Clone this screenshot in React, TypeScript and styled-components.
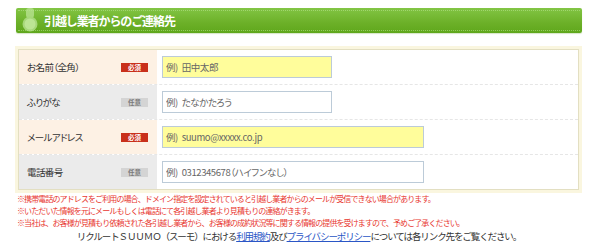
import React from "react";
import styled, { createGlobalStyle } from "styled-components";

const Global = createGlobalStyle`
  html, body { margin: 0; padding: 0; background: #fff; }
  body { font-family: "Noto Sans CJK JP", "Noto Sans", sans-serif; color: #333; }
  * { box-sizing: border-box; }
`;

const Page = styled.div`
  width: 600px;
  height: 244px;
  padding: 8px 0 0 16px;
  overflow: hidden;
`;

const Header = styled.div`
  width: 566px;
  height: 25px;
  border-radius: 2px;
  background: linear-gradient(#82c544, #6cb028 60%, #5fa71c);
  box-shadow: 0 1px 1px rgba(90, 150, 30, 0.25);
  display: flex;
  align-items: center;
  gap: 6px;
  padding-left: 6px;
  position: relative;
  &::before, &::after {
    content: "";
    position: absolute;
    left: 2px;
    right: 2px;
    border-top: 1px dotted rgba(190, 230, 150, 0.55);
  }
  &::before { top: 2px; }
  &::after { bottom: 2px; }
`;

const HeaderTitle = styled.h2`
  margin: 0;
  font-size: 12px;
  font-weight: 700;
  letter-spacing: -1.1px;
  color: #fff;
  line-height: 1;
`;

const Frame = styled.div`
  margin: 13px 0 0 -1px;
  width: 567px;
  padding: 3px;
  background: #faf6df;
`;

const Table = styled.div`
  border: 1px solid #e3dfc2;
  background: #fff;
  display: flex;
  flex-direction: column;
`;

const Row = styled.div<{ $last?: boolean }>`
  display: flex;
  height: ${(p) => (p.$last ? 34 : 35)}px;
  border-bottom: ${(p) => (p.$last ? "none" : "1px dashed #e6e6e6")};
`;

const Label = styled.div<{ $required?: boolean }>`
  width: 138px;
  flex: none;
  display: flex;
  align-items: center;
  justify-content: space-between;
  padding: 0 9px 0 8px;
  background: ${(p) => (p.$required ? "#fdf1e4" : "#ebebeb")};
  font-size: 9.5px;
  letter-spacing: -0.6px;
  font-feature-settings: "palt";
  color: #333;
`;

const Badge = styled.span<{ $required?: boolean }>`
  width: 27px;
  height: 9px;
  display: flex;
  align-items: center;
  justify-content: center;
  font-size: 6.5px;
  font-weight: 700;
  letter-spacing: 0;
  line-height: 1;
  background: ${(p) => (p.$required ? "#c9301b" : "#d4d4d4")};
  color: ${(p) => (p.$required ? "#fff" : "#7a7a7a")};
`;

const Field = styled.div`
  flex: 1;
  display: flex;
  align-items: center;
  padding-left: 5px;
`;

const Input = styled.input<{ $required?: boolean; $wide?: boolean }>`
  width: ${(p) => (p.$wide ? 262 : 170)}px;
  height: 22px;
  border: 1px solid #bccbd8;
  background: ${(p) => (p.$required ? "#fffd9b" : "#fff")};
  padding: 0 0 0 3px;
  font-family: "Noto Sans CJK JP", "Noto Sans", sans-serif;
  font-size: 9.5px;
  letter-spacing: -0.4px;
  font-feature-settings: "palt";
  word-spacing: 2px;
  color: #555;
  outline: none;
  &::placeholder { color: #666; opacity: 1; }
`;

const Notes = styled.div`
  margin-left: 1px;
  font-size: 8px;
  line-height: 12px;
  letter-spacing: -0.9px;
  color: #e8372f;
`;

const Note = styled.p`
  margin: 0;
  white-space: nowrap;
`;

const Footer = styled.p`
  margin: 0;
  width: 566px;
  text-align: center;
  font-size: 9.5px;
  line-height: 14px;
  letter-spacing: -1.1px;
  color: #333;
  white-space: nowrap;
`;

const Link = styled.a`
  color: #2a56c6;
  text-decoration: underline;
`;

const Icon = () => (
  <svg width="16" height="25" viewBox="0 0 16 25" style={{ flex: "none" }}>
    <rect x="4" y="0" width="8" height="10" rx="3" fill="#b3df8a" opacity="0.85" />
    <circle cx="8" cy="16" r="7.5" fill="#a6d779" />
    <circle cx="8" cy="16" r="5.5" fill="#bce594" />
  </svg>
);

const rows = [
  { label: "お名前（全角）", required: true, placeholder: "例) 田中太郎", wide: false },
  { label: "ふりがな", required: false, placeholder: "例) たなかたろう", wide: false },
  { label: "メールアドレス", required: true, placeholder: "例) suumo@xxxxx.co.jp", wide: true },
  { label: "電話番号", required: false, placeholder: "例) 0312345678（ハイフンなし）", wide: true },
];

export default function App() {
  return (
    <>
      <Global />
      <Page>
        <Header>
          <Icon />
          <HeaderTitle>引越し業者からのご連絡先</HeaderTitle>
        </Header>
        <Frame>
          <Table>
            {rows.map((r, i) => (
              <Row key={r.label} $last={i === rows.length - 1}>
                <Label $required={r.required}>
                  <span>{r.label}</span>
                  <Badge $required={r.required}>{r.required ? "必須" : "任意"}</Badge>
                </Label>
                <Field>
                  <Input readOnly placeholder={r.placeholder} $required={r.required} $wide={r.wide} />
                </Field>
              </Row>
            ))}
          </Table>
        </Frame>
        <Notes>
          <Note>※携帯電話のアドレスをご利用の場合、ドメイン指定を設定されていると引越し業者からのメールが受信できない場合があります。</Note>
          <Note>※いただいた情報を元にメールもしくは電話にて各引越し業者より見積もりの連絡がきます。</Note>
          <Note>※当社は、お客様が見積もり依頼された各引越し業者から、お客様の成約状況等に関する情報の提供を受けますので、予めご了承ください。</Note>
        </Notes>
        <Footer>
          リクルートＳＵＵＭＯ（スーモ）における<Link href="#">利用規約</Link>及び<Link href="#">プライバシーポリシー</Link>については各リンク先をご覧ください。
        </Footer>
      </Page>
    </>
  );
}
